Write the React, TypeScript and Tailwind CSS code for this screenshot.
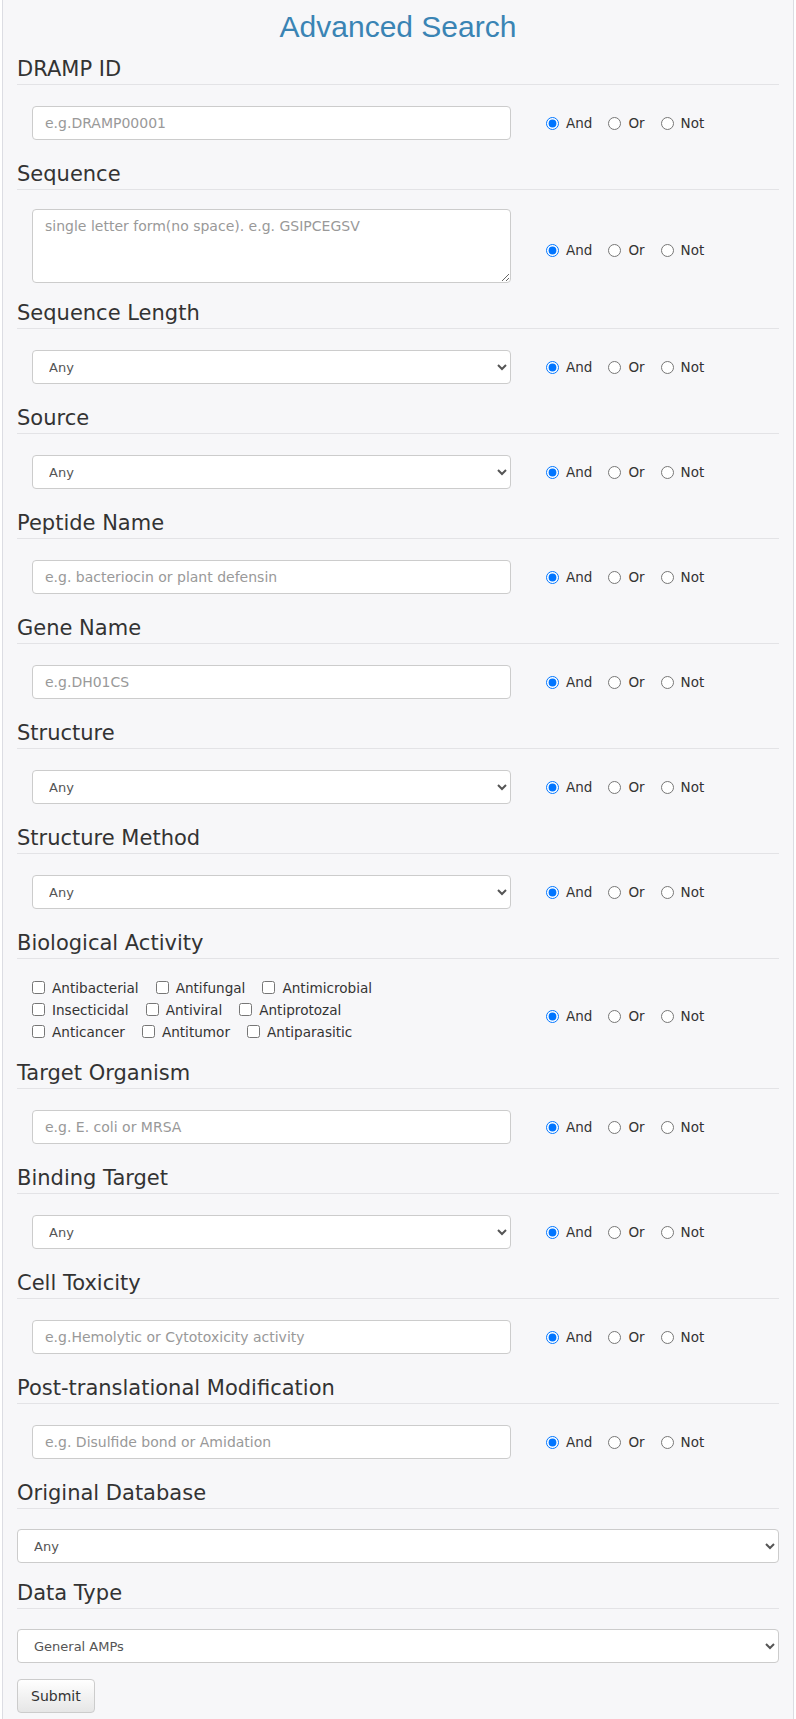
import React from 'react';

type Field =
    | { label: string; kind: 'input'; placeholder: string }
    | { label: string; kind: 'textarea'; placeholder: string }
    | { label: string; kind: 'select'; options: string[] }
    | { label: string; kind: 'checks'; rows: string[][] };

const fields: Field[] = [
    { label: 'DRAMP ID', kind: 'input', placeholder: 'e.g.DRAMP00001' },
    { label: 'Sequence', kind: 'textarea', placeholder: 'single letter form(no space). e.g. GSIPCEGSV' },
    { label: 'Sequence Length', kind: 'select', options: ['Any'] },
    { label: 'Source', kind: 'select', options: ['Any'] },
    { label: 'Peptide Name', kind: 'input', placeholder: 'e.g. bacteriocin or plant defensin' },
    { label: 'Gene Name', kind: 'input', placeholder: 'e.g.DH01CS' },
    { label: 'Structure', kind: 'select', options: ['Any'] },
    { label: 'Structure Method', kind: 'select', options: ['Any'] },
    {
        label: 'Biological Activity',
        kind: 'checks',
        rows: [
            ['Antibacterial', 'Antifungal', 'Antimicrobial'],
            ['Insecticidal', 'Antiviral', 'Antiprotozal'],
            ['Anticancer', 'Antitumor', 'Antiparasitic'],
        ],
    },
    { label: 'Target Organism', kind: 'input', placeholder: 'e.g. E. coli or MRSA' },
    { label: 'Binding Target', kind: 'select', options: ['Any'] },
    { label: 'Cell Toxicity', kind: 'input', placeholder: 'e.g.Hemolytic or Cytotoxicity activity' },
    { label: 'Post-translational Modification', kind: 'input', placeholder: 'e.g. Disulfide bond or Amidation' },
];

const inputCls =
    'w-[479px] h-[34px] bg-white border border-[#ccc] rounded-[4px] px-3 text-[14px] text-[#555] placeholder:text-[#999] outline-none';

const Heading = ({ children }: { children: React.ReactNode }) => (
    <h3 className="text-[21px] leading-[24px] pt-[1px] pb-[3px] border-b border-[#e3e3e6] text-[#333]">{children}</h3>
);

const Logic = ({ name, className = '' }: { name: string; className?: string }) => (
    <div className={`flex items-center text-[13.5px] text-[#333] ${className}`}>
        {['And', 'Or', 'Not'].map((op, i) => (
            <label key={op} className={`flex items-center gap-[7px] ${i > 0 ? 'ml-[16px]' : ''}`}>
                <input type="radio" name={name} defaultChecked={i === 0} className="m-0 w-[13px] h-[13px]" />
                {op}
            </label>
        ))}
    </div>
);

const Section = ({ field, idx }: { field: Field; idx: number }) => {
    const name = `logic-${idx}`;
    if (field.kind === 'textarea') {
        return (
            <section>
                <Heading>{field.label}</Heading>
                <div className="flex items-center pl-[15px] pt-[19px] pb-[17px]">
                    <textarea
                        placeholder={field.placeholder}
                        className="block w-[479px] h-[74px] bg-white border border-[#ccc] rounded-[4px] px-3 py-[6px] text-[14px] text-[#555] placeholder:text-[#999] outline-none"
                    />
                    <Logic name={name} className="ml-[35px] pt-2" />
                </div>
            </section>
        );
    }
    if (field.kind === 'checks') {
        return (
            <section>
                <Heading>{field.label}</Heading>
                <div className="flex items-center pl-[15px] pt-[18px] pb-[17px]">
                    <div className="w-[479px] flex flex-col text-[13.6px] text-[#333]">
                        {field.rows.map((row) => (
                            <div key={row[0]} className="flex items-center h-[22px]">
                                {row.map((c, j) => (
                                    <label key={c} className={`flex items-center gap-[7px] ${j > 0 ? 'ml-[17px]' : ''}`}>
                                        <input type="checkbox" className="m-0 w-[13px] h-[13px]" />
                                        {c}
                                    </label>
                                ))}
                            </div>
                        ))}
                    </div>
                    <Logic name={name} className="ml-[35px] pt-3" />
                </div>
            </section>
        );
    }
    return (
        <section>
            <Heading>{field.label}</Heading>
            <div className="flex items-center pl-[15px] pt-[21px] pb-[21px]">
                {field.kind === 'input' ? (
                    <input type="text" placeholder={field.placeholder} className={inputCls} />
                ) : (
                    <select className="w-[479px] h-[34px] bg-white border border-[#ccc] rounded-[4px] px-3 text-[13px] text-[#555] outline-none">
                        {field.options.map((o) => (
                            <option key={o}>{o}</option>
                        ))}
                    </select>
                )}
                <Logic name={name} className="ml-[35px]" />
            </div>
        </section>
    );
};

const FullSelect = ({ label, value }: { label: string; value: string }) => (
    <section>
        <Heading>{label}</Heading>
        <div className="pt-[20px] pb-[17px]">
            <select className="block w-full h-[34px] bg-white border border-[#ccc] rounded-[4px] px-3 text-[13px] text-[#555] outline-none">
                <option>{value}</option>
            </select>
        </div>
    </section>
);

export default function App() {
    return (
        <div className="min-h-screen bg-white px-[2px]" style={{ fontFamily: '"DejaVu Sans", Verdana, sans-serif' }}>
            <div className="min-h-[1719px] bg-[#f7f7f9] border-x border-[#dcdde3] px-[14px]">
                {/* Title */}
                <h1
                    className="text-center text-[30px] leading-[36px] pt-[9px] pb-[11px] text-[#3a84b4]"
                    style={{ fontFamily: '"Liberation Sans", Arial, sans-serif' }}
                >
                    Advanced Search
                </h1>

                {fields.map((f, i) => (
                    <Section key={f.label} field={f} idx={i} />
                ))}

                <FullSelect label="Original Database" value="Any" />
                <FullSelect label="Data Type" value="General AMPs" />

                <button className="block -mt-[1px] h-[34px] px-[13px] text-[14px] text-[#333] border border-[#ccc] rounded-[4px] bg-gradient-to-b from-white to-[#e6e6e6]">
                    Submit
                </button>
            </div>
        </div>
    );
}
